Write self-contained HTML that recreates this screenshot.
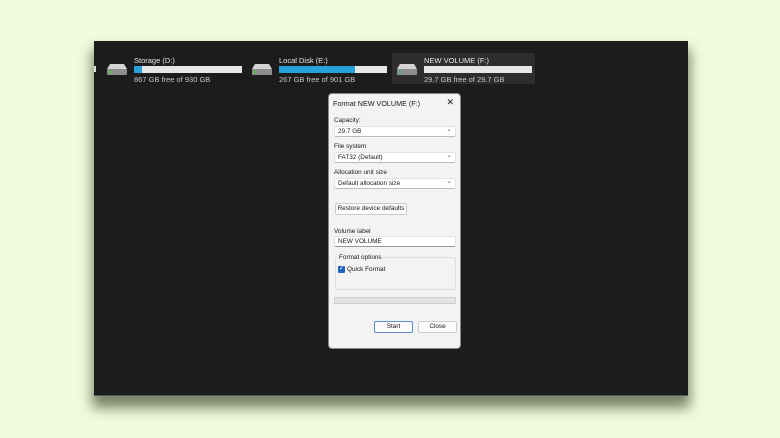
<!DOCTYPE html>
<html><head><meta charset="utf-8"><style>
*{margin:0;padding:0;box-sizing:border-box}
body{width:780px;height:438px;background:#f1fbdf;position:relative;overflow:hidden;font-family:"Liberation Sans",sans-serif}
.win{position:absolute;left:94px;top:41px;width:594px;height:355px;background:#1c1c1c;box-shadow:0 10px 12px 2px rgba(70,80,50,.7);border-bottom:1px solid #555}
.drive{position:absolute;top:12px;height:32px;color:#ddd;font-size:7.5px}
.drive .ic{position:absolute;left:0;top:9px;width:22px;height:14px}
.drive .name{position:absolute;left:28px;top:3px;font-size:7.5px;color:#e8e8e8;white-space:nowrap}
.drive .bar{position:absolute;left:28px;top:13px;width:108px;height:7px;background:#e6e6e6}
.drive .bar i{display:block;height:100%;background:#27a0dc}
.drive .sz{position:absolute;left:28px;top:22px;color:#c8c8c8;white-space:nowrap}
.dlg{position:absolute;left:328px;top:93px;width:133px;height:256px;background:#f3f3f3;border:1px solid #888;border-radius:4px;font-size:6.4px;color:#1a1a1a}
.dlg .t{position:absolute;left:4px;top:5px;font-size:7.2px}
.dlg .x{position:absolute;right:6px;top:3px;font-size:9px}
.lbl{position:absolute;left:5px}
.sel{position:absolute;left:5px;width:122px;height:11px;background:#fff;border:1px solid #e2e2e2;border-bottom-color:#bbb;border-radius:2px;padding-left:3px;line-height:9px}
.dd:after{content:"⌄";position:absolute;right:3px;top:-2px;font-size:7px;color:#666}
.btn{position:absolute;height:12px;background:#fbfbfb;border:1px solid #ccc;border-radius:2px;text-align:center;line-height:10px}
</style></head><body>
<div class="win">
 <div style="position:absolute;left:0;top:25px;width:2px;height:6px;background:#ddd"></div>
 <div style="position:absolute;left:298px;top:12px;width:143px;height:31px;background:#2d2d2d"></div>
 <div class="drive" style="left:12px">
  <svg class="ic" viewBox="0 0 22 14"><path d="M4 2h14l3 5H1z" fill="#d4d4d4"/><rect x="1" y="7" width="20" height="6" rx="1" fill="#8e8e8e"/><rect x="3" y="9" width="2" height="2" fill="#3c3"/></svg>
  <div class="name">Storage (D:)</div><div class="bar"><i style="width:7%"></i></div><div class="sz">867 GB free of 930 GB</div></div>
 <div class="drive" style="left:157px">
  <svg class="ic" viewBox="0 0 22 14"><path d="M4 2h14l3 5H1z" fill="#d4d4d4"/><rect x="1" y="7" width="20" height="6" rx="1" fill="#8e8e8e"/><rect x="3" y="9" width="2" height="2" fill="#3c3"/></svg>
  <div class="name">Local Disk (E:)</div><div class="bar"><i style="width:70%"></i></div><div class="sz">267 GB free of 901 GB</div></div>
 <div class="drive" style="left:302px">
  <svg class="ic" viewBox="0 0 22 14"><path d="M4 2h14l3 5H1z" fill="#d4d4d4"/><rect x="1" y="7" width="20" height="6" rx="1" fill="#8e8e8e"/><rect x="3" y="9" width="2" height="2" fill="#3c3"/></svg>
  <div class="name">NEW VOLUME (F:)</div><div class="bar"><i style="width:0"></i></div><div class="sz">29.7 GB free of 29.7 GB</div></div>
</div>
<div class="dlg">
 <div class="t">Format NEW VOLUME (F:)</div><div class="x">✕</div>
 <div class="lbl" style="top:23px">Capacity:</div>
 <div class="sel dd" style="top:32px">29.7 GB</div>
 <div class="lbl" style="top:49px">File system</div>
 <div class="sel dd" style="top:58px">FAT32 (Default)</div>
 <div class="lbl" style="top:75px">Allocation unit size</div>
 <div class="sel dd" style="top:84px">Default allocation size</div>
 <div class="btn" style="left:6px;top:109px;width:72px">Restore device defaults</div>
 <div class="lbl" style="top:134px">Volume label</div>
 <div class="sel" style="top:142px;border-bottom-color:#999">NEW VOLUME</div>
 <div style="position:absolute;left:6px;top:163px;width:121px;height:33px;border:1px solid #ddd;border-radius:2px"></div>
 <div class="lbl" style="top:160px;left:9px;background:#f3f3f3;padding:0 1px">Format options</div>
 <div style="position:absolute;left:9px;top:172px;width:7px;height:7px;background:#1f64c0;border-radius:1px;color:#fff;font-size:6px;line-height:7px;text-align:center">✓</div>
 <div class="lbl" style="top:172px;left:18px">Quick Format</div>
 <div style="position:absolute;left:5px;top:203px;width:122px;height:7px;background:#e4e4e4;border:1px solid #ccc;border-radius:1px"></div>
 <div class="btn" style="left:45px;top:227px;width:39px;border-color:#5b8fd0">Start</div>
 <div class="btn" style="left:89px;top:227px;width:39px">Close</div>
</div>
</body></html>
